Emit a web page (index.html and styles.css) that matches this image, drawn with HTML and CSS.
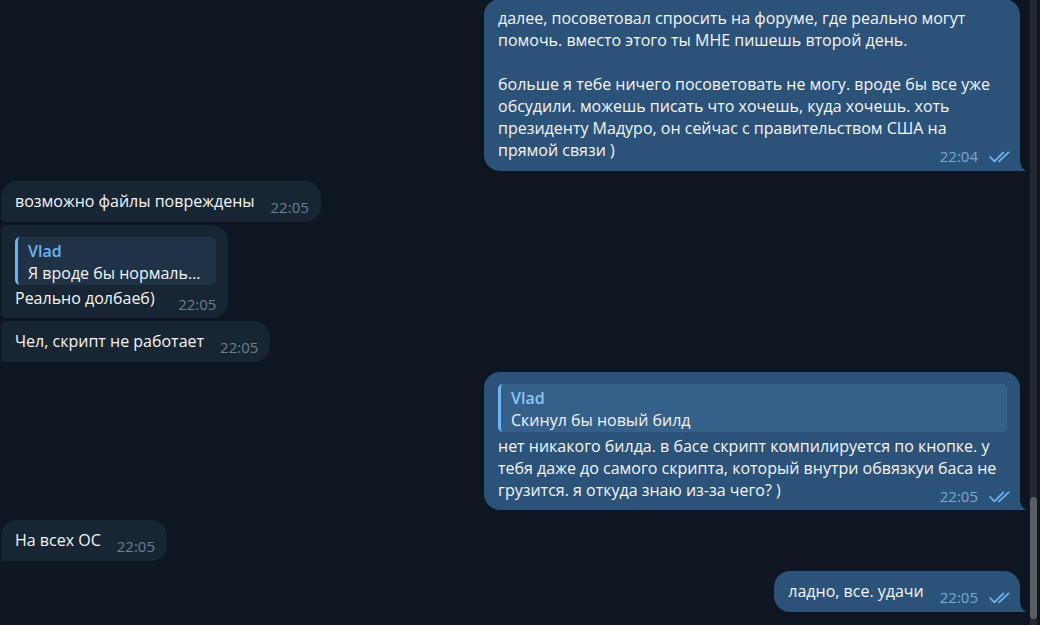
FILE: index.html
```html
<!DOCTYPE html>
<html lang="ru">
<head>
<meta charset="utf-8">
<title>Chat</title>
<link rel="stylesheet" href="styles.css">
</head>
<body>
<div class="app">
  <div class="chat">
    <div class="row row-out first">
      <div class="bubble out wide tail">
        <div class="text">далее, посоветовал спросить на форуме, где реально могут<br>помочь. вместо этого ты МНЕ пишешь второй день.<br><br>больше я тебе ничего посоветовать не могу. вроде бы все уже<br>обсудили. можешь писать что хочешь, куда хочешь. хоть<br>президенту Мадуро, он сейчас с правительством США на<br>прямой связи )<span class="meta"><span class="time">22:04</span><svg class="checks" viewBox="0 0 22 12" width="22" height="12"><path d="M1.2 6 L5.4 10.4 L14.4 1.4 M10 10.4 L19.6 1.4" /></svg></span></div>
      </div>
    </div>

    <div class="row row-in group">
      <div class="bubble in top-first">
        <div class="text">возможно файлы повреждены<span class="meta"><span class="time">22:05</span></span></div>
      </div>
    </div>
    <div class="row row-in same">
      <div class="bubble in mid has-reply">
        <div class="reply"><div class="reply-name">Vlad</div><div class="reply-text">Я вроде бы нормаль…</div></div>
        <div class="text">Реально долбаеб)<span class="meta"><span class="time">22:05</span></span></div>
      </div>
    </div>
    <div class="row row-in same">
      <div class="bubble in last">
        <div class="text">Чел, скрипт не работает<span class="meta"><span class="time">22:05</span></span></div>
      </div>
    </div>

    <div class="row row-out group">
      <div class="bubble out wide tail has-reply">
        <div class="reply"><div class="reply-name">Vlad</div><div class="reply-text">Скинул бы новый билд</div></div>
        <div class="text">нет никакого билда. в басе скрипт компилируется по кнопке. у<br>тебя даже до самого скрипта, который внутри обвязкуи баса не<br>грузится. я откуда знаю из-за чего? )<span class="meta"><span class="time">22:05</span><svg class="checks" viewBox="0 0 22 12" width="22" height="12"><path d="M1.2 6 L5.4 10.4 L14.4 1.4 M10 10.4 L19.6 1.4" /></svg></span></div>
      </div>
    </div>

    <div class="row row-in group">
      <div class="bubble in top-first last">
        <div class="text">На всех ОС<span class="meta"><span class="time">22:05</span></span></div>
      </div>
    </div>

    <div class="row row-out group">
      <div class="bubble out tail">
        <div class="text">ладно, все. удачи<span class="meta"><span class="time">22:05</span><svg class="checks" viewBox="0 0 22 12" width="22" height="12"><path d="M1.2 6 L5.4 10.4 L14.4 1.4 M10 10.4 L19.6 1.4" /></svg></span></div>
      </div>
    </div>
  </div>
  <div class="scrollbar"><div class="thumb"></div></div>
</div>
</body>
</html>
```

FILE: styles.css
```css
* { box-sizing: border-box; }

html, body {
  margin: 0;
  padding: 0;
  background: #0e1621;
}

body {
  width: 1040px;
  height: 625px;
  overflow: hidden;
  font-family: "Open Sans", "Noto Sans", sans-serif;
  font-size: 16px;
  color: #f5f5f5;
}

.app {
  display: flex;
  height: 625px;
}

.chat {
  flex: 1;
  display: flex;
  flex-direction: column;
  padding-right: 10px;
  padding-left: 1px;
}

.row {
  display: flex;
}

.row-out { justify-content: flex-end; }
.row-in { justify-content: flex-start; }

.row.first { margin-top: -1px; }
.row.group { margin-top: 10px; }
.row.same { margin-top: 3px; }

.bubble {
  position: relative;
  max-width: 536px;
  padding: 9px 12px 10px 14px;
  line-height: 22px;
  border-radius: 16px;
}

.bubble.wide { width: 536px; }

.bubble.out {
  background: #2b5278;
  padding-right: 13px;
  border-bottom-right-radius: 0;
}

.bubble.out.has-reply { padding-bottom: 9px; }

.bubble.out.tail::after {
  content: "";
  position: absolute;
  right: -7px;
  bottom: 0;
  width: 7px;
  height: 11px;
  background: radial-gradient(ellipse 7px 11px at 100% 0, transparent 97%, #2b5278 100%);
}

.row.first .bubble { padding-top: 8px; }

.bubble.in {
  background: #182533;
}

.bubble.in.top-first { border-bottom-left-radius: 5px; }
.bubble.in.mid { border-top-left-radius: 5px; border-bottom-left-radius: 5px; padding-bottom: 9px; }
.bubble.in.last { border-top-left-radius: 5px; border-bottom-left-radius: 0; }
.bubble.in.top-first.last { border-top-left-radius: 16px; border-bottom-left-radius: 0; }

.text {
  display: flow-root;
  white-space: nowrap;
}

.reply {
  margin-top: 3px;
  margin-bottom: 2px;
  padding: 3px 16px 1px 10px;
  border-left: 3px solid #6ab3f3;
  border-radius: 5px;
  background: rgba(106, 179, 243, 0.1);
  line-height: 22px;
  white-space: nowrap;
}

.bubble.out .reply {
  margin-bottom: 3px;
  border-left-color: #6db6f2;
  background: rgba(120, 190, 253, 0.13);
}

.reply-name {
  font-weight: 600;
  color: #6ab3f3;
}

.bubble.out .reply-name { color: #8cc6f5; }

.reply-text { color: #f0f3f6; }

.meta {
  float: right;
  display: flex;
  align-items: center;
  line-height: 17px;
  margin: 9px 0 -5px 16px;
  font-size: 15px;
}

.bubble.in .time { color: #6d7f8f; }
.bubble.out .time { color: #7da8d3; }

.bubble.out .meta { margin-right: -4px; }

.checks {
  display: block;
  margin-left: 11px;
  fill: none;
  stroke: #6cb3ef;
  stroke-width: 1.8;
  stroke-linecap: round;
  stroke-linejoin: round;
}

.scrollbar {
  width: 7px;
  margin-right: 3px;
  background: #232a32;
  display: flex;
  flex-direction: column;
  justify-content: flex-end;
  padding-bottom: 6px;
}

.thumb {
  height: 122px;
  border-radius: 4px;
  background: #5a5e63;
}
```
